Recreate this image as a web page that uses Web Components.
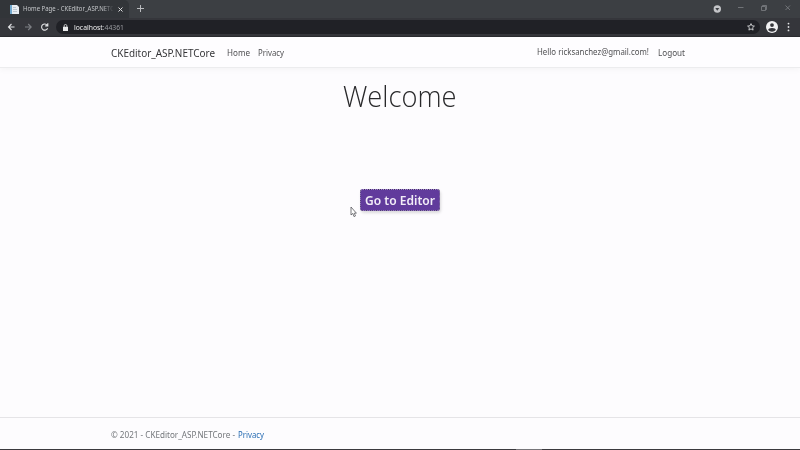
<!DOCTYPE html>
<html lang="en"><head><meta charset="utf-8"><title>Home Page - CKEditor_ASP.NETCore</title>
<style>html,body{margin:0;height:100%;overflow:hidden;background:#fdfcfe}body{font-family:"Noto Sans","Open Sans",sans-serif}</style></head>
<body><app-window></app-window>
<script>
const define=(name,html)=>customElements.define(name,class extends HTMLElement{
  constructor(){super();const t=document.createElement('template');t.innerHTML=html;this.attachShadow({mode:'open'}).append(t.content.cloneNode(true));}
});
// Text whose natural run is scaled horizontally to the width given in "w".
customElements.define('fit-text',class extends HTMLElement{
  constructor(){super();this.attachShadow({mode:'open'}).innerHTML='<style>:host{display:block;white-space:nowrap;flex:none}span{display:inline-block;transform-origin:0 50%}</style><span><slot></slot></span>';}
  connectedCallback(){const w=+this.getAttribute('w'),s=this.shadowRoot.querySelector('span');this.style.width=w+'px';
    const n=s.getBoundingClientRect().width;if(n)s.style.transform=`scaleX(${w/n})`;}
});
define('browser-tabs',`<style>
:host{display:flex;height:18px;background:#3c3f43;align-items:stretch;color:#c5c7ca}
.tab{width:129px;box-sizing:border-box;background:#323539;border-radius:0 5px 0 0;display:flex;align-items:center;padding-left:10px}
.fav{margin-right:4px}fit-text{font-size:6.6px;line-height:18px}
.title{width:90px;overflow:hidden;-webkit-mask-image:linear-gradient(90deg,#000 80px,transparent 91px);mask-image:linear-gradient(90deg,#000 80px,transparent 91px)}
.x{margin-left:5px}.plus{margin:5px 0 0 8px}.win{margin-left:auto;margin-right:7px;display:flex;align-items:flex-start}svg{display:block;flex:none}
</style><div class="tab"><svg class="fav" width="9" height="9" viewBox="0 0 9 9"><path fill="#e9eef3" d="M0 0h7l2 2v7H0z"/><path fill="#72a9cf" d="M0 0h2v9H0z"/><path stroke="#a9b6c2" stroke-width=".7" d="M3 2.5h3M3 4.5h4M3 6.5h4"/></svg><div class="title"><fit-text w="91">Home Page - CKEditor_ASP.NETC</fit-text></div><svg class="x" width="5" height="5"><path stroke="#dcdddf" d="M.5 .5l4 4m0-4l-4 4"/></svg></div>
<svg class="plus" width="7" height="7"><path stroke="#b9bbbe" d="M3.5 0v7M0 3.5h7"/></svg>
<div class="win"><svg width="83" height="18"><circle cx="7.3" cy="9" r="3.7" fill="#c4c5c8"/><path fill="#3c3f43" d="M5.3 8h4l-2 2.7z"/><path fill="none" stroke="#7d8085" stroke-width=".8" d="M28 7.5h5.5M51.5 6.5h4v4h-4zM52.5 6.5v-1h4v4h-1M75.5 5.5l4.5 4.5m0-4.5l-4.5 4.5"/></svg></div>`);
define('browser-toolbar',`<style>
:host{display:flex;height:19px;background:#35363b;align-items:center;border-bottom:1px solid #2b2c30;box-sizing:border-box}
svg{display:block;flex:none}.nav{width:56px}.bar{flex:1;height:14px;border-radius:7px;background:#202126;display:flex;align-items:center;padding-left:7px;color:#9b9da1}
fit-text{font-size:7.3px;line-height:14px}.lock{margin-right:6px}b{font-weight:400;color:#f2f2f3}.star{margin-left:auto;margin-right:5px}.end{width:40px}
</style><svg class="nav" width="56" height="18" fill="none" stroke-width="1.1"><path stroke="#e2e3e5" d="M14.5 9H8.5M11.5 6l-3 3 3 3"/><path stroke="#7d7f84" d="M25 9h6M28.2 6l3 3-3 3"/><path stroke="#e2e3e5" d="M47.2 7.2A3.1 3.1 0 1 0 47.6 10.2M47.8 5.3v2.6h-2.6"/></svg>
<div class="bar"><svg class="lock" width="5" height="7"><path fill="#e9eaeb" d="M0 2.8h5V7H0z"/><path fill="none" stroke="#e9eaeb" stroke-width=".8" d="M1.2 3V1.7q0-1.2 1.3-1.2t1.3 1.2V3"/></svg><fit-text w="50"><b>localhost</b>:44361</fit-text>
<svg class="star" width="8" height="8" viewBox="0 0 8 8"><path fill="none" stroke="#d5d6d8" stroke-width=".9" stroke-linejoin="round" d="M4 .6l1 2.2 2.4.3-1.8 1.6.5 2.4L4 5.9 1.9 7.1l.5-2.4L.6 3.1 3 2.8z"/></svg></div>
<svg class="end" width="40" height="18"><circle cx="12" cy="9" r="6" fill="#f2f2f3"/><circle cx="12" cy="7.1" r="1.9" fill="#35363b"/><path fill="#35363b" d="M8.2 12q0-2.1 3.8-2.1t3.8 2.1Q14.5 13.7 12 13.7T8.2 12z"/><g fill="#e2e3e5"><circle cx="28.5" cy="5.6" r=".9"/><circle cx="28.5" cy="9" r=".9"/><circle cx="28.5" cy="12.4" r=".9"/></g></svg>`);
define('site-nav',`<style>
:host{display:flex;box-sizing:border-box;height:31px;flex:none;padding:0 115px 0 111px;align-items:flex-start;background:#fefdff;border-bottom:1px solid #ececee;box-shadow:0 2px 6px #00000009;color:#505053}
fit-text{font-size:8.4px;line-height:32px}.brand{font-size:10.4px;color:#343437;margin-right:12px}.home{margin-right:8px}.user{margin-left:auto;margin-right:9px;line-height:30px}
</style><fit-text class="brand" w="104">CKEditor_ASP.NETCore</fit-text><fit-text class="home" w="23">Home</fit-text><fit-text w="26">Privacy</fit-text><fit-text class="user" w="112">Hello ricksanchez@gmail.com!</fit-text><fit-text w="27">Logout</fit-text>`);
define('editor-button',`<style>:host{display:block}button{display:flex;align-items:center;justify-content:center;box-sizing:border-box;width:80px;height:22px;padding:0;background:#613b9c;border:1px dashed #3c2862;outline:1px dotted #a58dc6;outline-offset:-1px;border-radius:3px;box-shadow:1px 2px 3px #0002;color:#f2edf7;font:600 12.3px "Noto Sans","Open Sans",sans-serif}</style><button><fit-text w="70"><slot></slot></fit-text></button>`);
define('home-page',`<style>
:host{flex:1;display:flex;flex-direction:column;align-items:center;padding-top:8px;position:relative}
h1{margin:0;font-weight:300;font-size:28.5px;line-height:40px;height:40px;color:#29292b;font-family:"Open Sans","Noto Sans",sans-serif}editor-button{margin-top:73px}
.cursor{position:absolute;left:350px;top:138px}
</style><h1><fit-text w="113.5">Welcome</fit-text></h1><editor-button>Go to Editor</editor-button>
<svg class="cursor" width="7" height="12"><path fill="#fff" stroke="#55555a" stroke-width=".8" d="M1 1v8l1.8-1.6L4 10.6l1.5-.7-1.3-2.7h2.2z"/></svg>`);
define('site-footer',`<style>
:host{display:flex;flex:none;box-sizing:border-box;height:32px;border-top:1px solid #e5e4e7;padding-left:111px;gap:2.5px;color:#74777b}
fit-text{font-size:8.4px;line-height:34px}a{color:#276cb3}
</style><fit-text w="124">© 2021 - CKEditor_ASP.NETCore -</fit-text><a><fit-text w="26">Privacy</fit-text></a>`);
define('app-window',`<style>:host{display:flex;flex-direction:column;width:800px;height:450px;background:#fdfcfe}.edge{height:1px;flex:none;background:linear-gradient(90deg,#3b3a3e 516px,#77767a 516px 542px,#3b3a3e 542px)}</style><browser-tabs></browser-tabs><browser-toolbar></browser-toolbar><site-nav></site-nav><home-page></home-page><site-footer></site-footer><div class="edge"></div>`);
</script></body></html>
